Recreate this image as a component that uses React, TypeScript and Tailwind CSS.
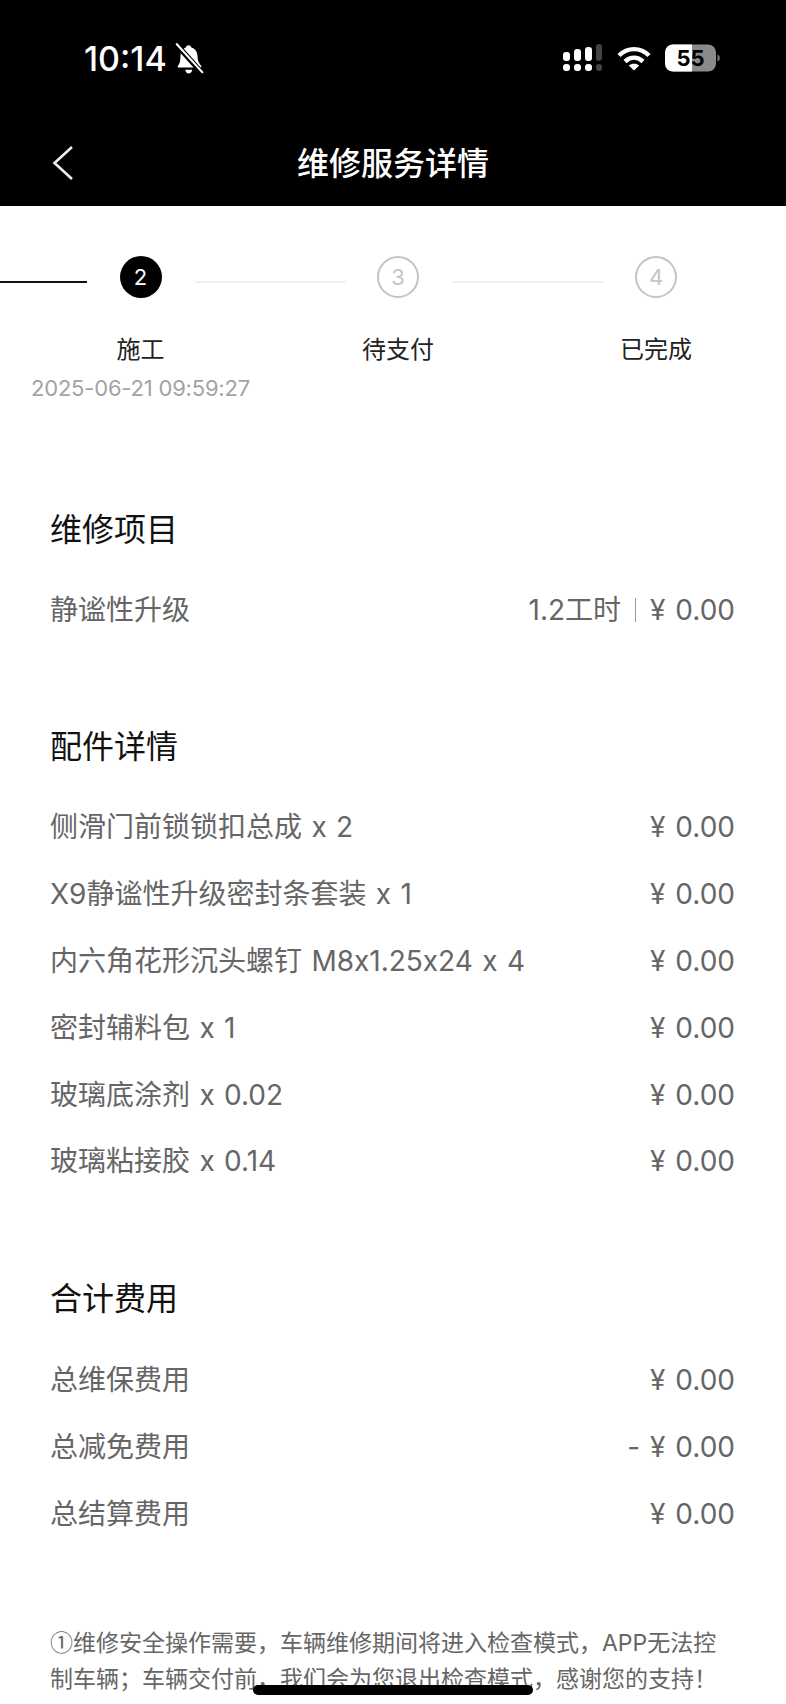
const fontStack = "font-['Inter','Noto_Sans_CJK_SC',sans-serif]";

const parts = [
  "侧滑门前锁锁扣总成 x 2",
  "X9静谧性升级密封条套装 x 1",
  "内六角花形沉头螺钉 M8x1.25x24 x 4",
  "密封辅料包 x 1",
  "玻璃底涂剂 x 0.02",
  "玻璃粘接胶 x 0.14",
];

const totals = [
  { name: "总维保费用", price: "¥ 0.00" },
  { name: "总减免费用", price: "- ¥ 0.00" },
  { name: "总结算费用", price: "¥ 0.00" },
];

function StatusIcons() {
  return (
    <div className="flex items-center">
      <svg width="40" height="28" viewBox="0 0 40 28" fill="#fff">
        <rect x="0" y="20" width="7" height="7" rx="3" />
        <rect x="11" y="20" width="7" height="7" rx="3" />
        <rect x="22" y="20" width="7" height="7" rx="3" />
        <rect x="33" y="20" width="6" height="7" rx="3" fill="#444" />
        <rect x="0" y="8" width="7" height="9" rx="3" />
        <rect x="11" y="5" width="7" height="12" rx="3" />
        <rect x="22" y="3" width="7" height="14" rx="3" />
        <rect x="33" y="0" width="6" height="17" rx="3" fill="#444" />
      </svg>
      <svg className="ml-[14px]" width="34" height="25" viewBox="0 0 34 25" fill="none" stroke="#fff" strokeWidth="4.4">
        <path d="M2 9.5C10.5 1 23.5 1 32 9.5" />
        <path d="M8 15.5C13.5 10.5 20.5 10.5 26 15.5" />
        <path d="M17 24.5L11.8 19.6C14.8 17 19.2 17 22.2 19.6Z" fill="#fff" stroke="none" />
      </svg>
      <svg className="ml-[14px]" width="55" height="28" viewBox="0 0 55 28">
        <rect x="0" y="0.5" width="51" height="27" rx="8" fill="#8a8a8a" />
        <path d="M8 .5H27V27.5H8A8 8 0 0 1 0 19.5V8.5A8 8 0 0 1 8 .5Z" fill="#fff" />
        <path d="M52.5 10.5C54.2 11 54.8 12.5 54.8 14S54.2 17 52.5 17.5Z" fill="#777" />
        <text x="25.5" y="22" textAnchor="middle" fontFamily="Inter" fontWeight="700" fontSize="22" fill="#000">
          55
        </text>
      </svg>
    </div>
  );
}

function Step({ num, label, active }: { num: number; label: string; active?: boolean }) {
  return (
    <div className="flex flex-col items-center w-[42px]">
      <div
        className={
          active
            ? "w-[42px] h-[42px] rounded-full bg-black text-white flex items-center justify-center text-[22px]"
            : "w-[42px] h-[42px] rounded-full border-2 border-[#c4c4c4] text-[#c4c4c4] flex items-center justify-center text-[22px]"
        }
      >
        {num}
      </div>
      <p className="mt-[34px] text-[24px] leading-[36px] text-[#222] whitespace-nowrap">{label}</p>
    </div>
  );
}

function Row({ name, price }: { name: string; price: string }) {
  return (
    <div className="flex items-center justify-between h-[66.8px]">
      <span>{name}</span>
      <span className="[word-spacing:2px]">{price}</span>
    </div>
  );
}

export default function App() {
  return (
    <div className={`relative w-[786px] h-[1704px] overflow-hidden bg-white ${fontStack}`}>
      <div className="h-[206px] bg-black text-white">
        <div className="h-[132px] pl-[84px] pr-[66px] pt-[43px] flex items-start justify-between">
          <div className="flex items-center h-[32px]">
            <span className="text-[34px] leading-[32px] font-medium">10:14</span>
            <svg className="ml-[7px]" width="30" height="32" viewBox="0 0 28 30" fill="#fff">
              <path d="M13.5 2C15 2 16 3 16.2 4.2C20 5.4 22 8.6 22 12.5C22 17 23.5 19.5 25.5 21.5V23H3.5V21.5C5.2 19.8 6 17 6 12.5C6 8.6 8 5.2 11 4.2C11.2 3 12.2 2 13.5 2Z" />
              <path d="M10.5 25H17C16.8 27.2 15.3 28.5 13.7 28.5C12 28.5 10.7 27.2 10.5 25Z" />
              <path d="M1 0L27 29" stroke="#000" strokeWidth="5" />
              <path d="M2 0.5L27 28" stroke="#fff" strokeWidth="2" />
            </svg>
          </div>
          <div className="mt-[1px]">
            <StatusIcons />
          </div>
        </div>
        <div className="relative h-[64px] flex items-center justify-center">
          <svg className="absolute left-[52px] top-[14px]" width="22" height="34" viewBox="0 0 22 34" fill="none" stroke="#eee" strokeWidth="2.6">
            <path d="M20 1L2.5 17L20 33" />
          </svg>
          <span className="text-[32px] font-medium leading-[44px] text-white">维修服务详情</span>
        </div>
      </div>

      <div className="flex items-start pt-[50px] h-[210px]">
        <div className="w-[87px] h-[2px] bg-[#111] mt-[25px]" />
        <div className="ml-[32.5px]">
          <Step num={2} label="施工" active />
        </div>
        <div className="ml-[33.5px] w-[151px] h-[2px] bg-[#f0f0f0] mt-[25px]" />
        <div className="ml-[31px]">
          <Step num={3} label="待支付" />
        </div>
        <div className="ml-[34px] w-[150px] h-[2px] bg-[#f0f0f0] mt-[25px]" />
        <div className="ml-[32px]">
          <Step num={4} label="已完成" />
        </div>
      </div>
      <p className="mt-[-43px] ml-[31px] text-[22px] leading-[30px] tracking-[-0.2px] text-[#a3a3a3]">2025-06-21 09:59:27</p>

      <div className="pl-[50px] pr-[51px] text-[28px] leading-[40px] text-[#666] [font-feature-settings:'calt'_0] [word-spacing:1.5px]">
        <h2 className="mt-[105px] text-[32px] leading-[44px] text-[#111]">维修项目</h2>
        <div className="mt-[24px] flex items-center justify-between h-[67px]">
          <span>静谧性升级</span>
          <span className="flex items-center [word-spacing:2px]">
            1.2工时
            <span className="ml-[14px] mr-[14px] w-[1px] h-[24px] bg-[#999]" />
            ¥ 0.00
          </span>
        </div>

        <h2 className="mt-[82px] text-[32px] leading-[44px] text-[#111]">配件详情</h2>
        <div className="mt-[25px]">
          {parts.map((name) => (
            <Row key={name} name={name} price="¥ 0.00" />
          ))}
        </div>

        <h2 className="mt-[82px] text-[32px] leading-[44px] text-[#111]">合计费用</h2>
        <div className="mt-[26px]">
          {totals.map((t) => (
            <Row key={t.name} name={t.name} price={t.price} />
          ))}
        </div>

        <p className="mt-[76px] text-[23px] leading-[36px] text-[#666] whitespace-nowrap [word-spacing:0px]">
          <span className="font-['Noto_Sans_CJK_SC']">①</span>维修安全操作需要，车辆维修期间将进入检查模式，APP无法控
          <br />
          制车辆；车辆交付前，我们会为您退出检查模式，感谢您的支持！
        </p>
      </div>

      <div className="absolute left-[253px] bottom-[9px] w-[280px] h-[10px] rounded-full bg-black" />
    </div>
  );
}
